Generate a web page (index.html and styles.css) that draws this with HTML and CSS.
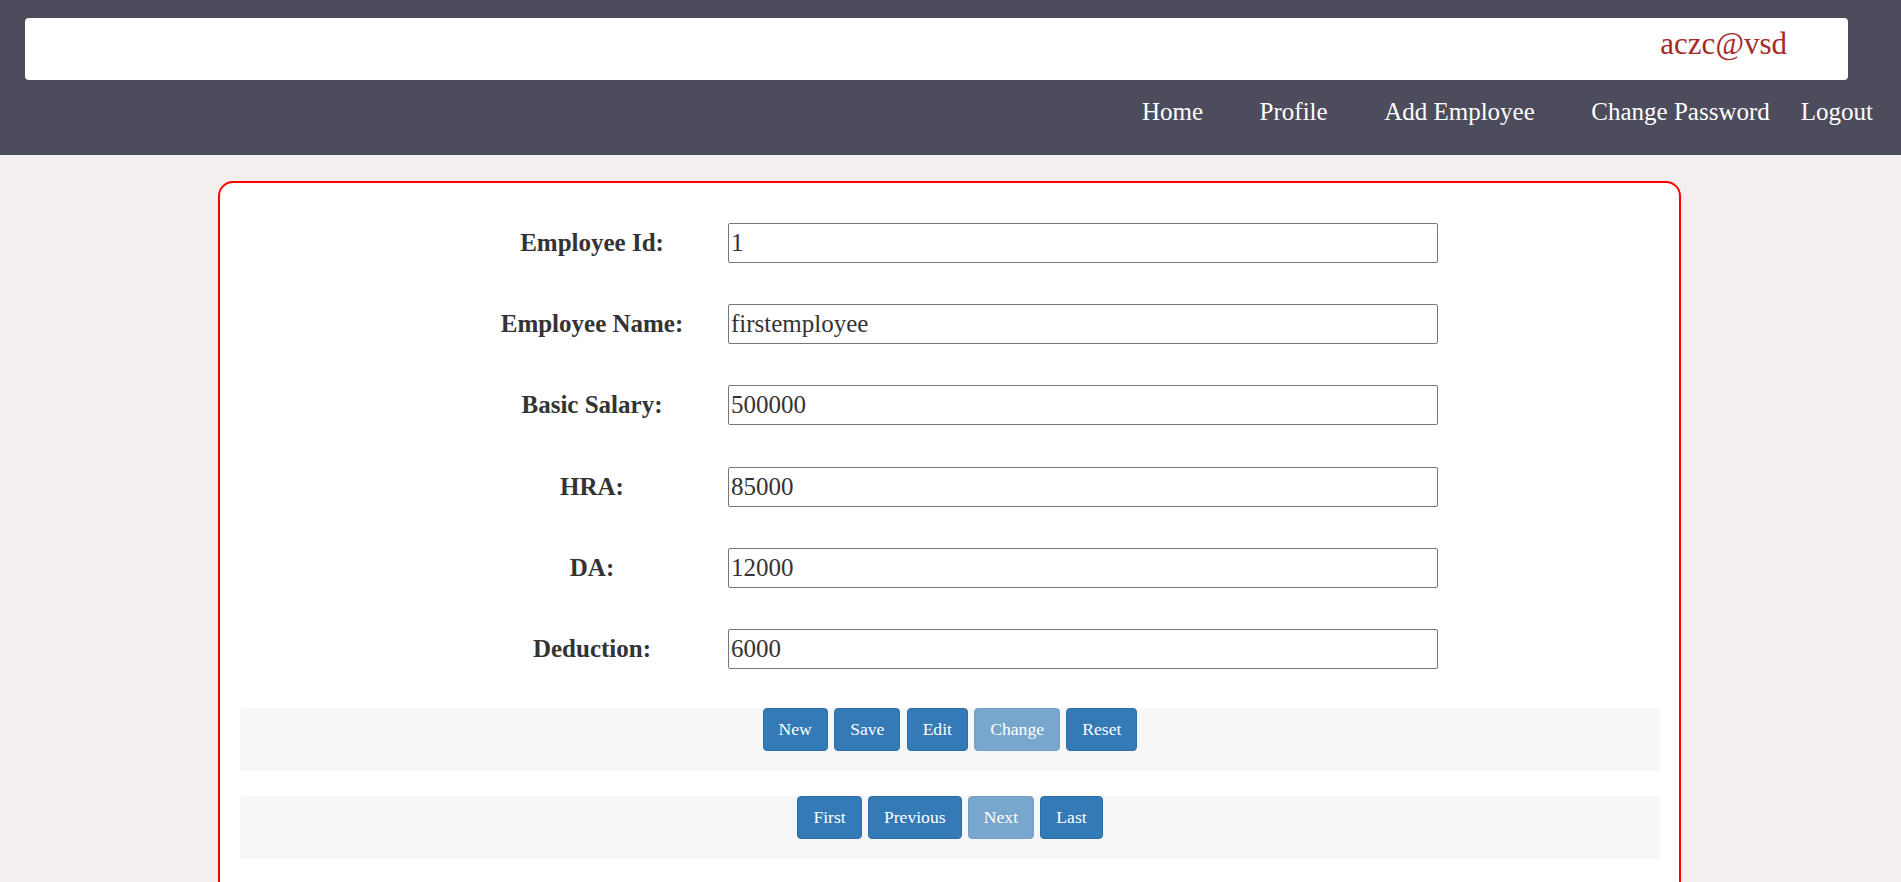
FILE: index.html
```html
<!DOCTYPE html>
<html lang="en">
<head>
<meta charset="utf-8">
<title>Employee</title>
<link rel="stylesheet" href="styles.css">
</head>
<body>
<header class="topbar">
  <div class="userbox"><span class="username">aczc@vsd</span></div>
  <nav class="nav">
    <a class="nav-link" href="#">Home</a>
    <a class="nav-link" href="#">Profile</a>
    <a class="nav-link" href="#">Add Employee</a>
    <a class="nav-link" href="#">Change Password</a>
    <a class="nav-link nav-logout" href="#">Logout</a>
  </nav>
</header>
<main class="card">
  <form class="emp-form">
    <label class="field-label" for="eid">Employee Id:</label>
    <input class="field-input" id="eid" type="text" value="1">
    <label class="field-label" for="ename">Employee Name:</label>
    <input class="field-input" id="ename" type="text" value="firstemployee">
    <label class="field-label" for="basic">Basic Salary:</label>
    <input class="field-input" id="basic" type="text" value="500000">
    <label class="field-label" for="hra">HRA:</label>
    <input class="field-input" id="hra" type="text" value="85000">
    <label class="field-label" for="da">DA:</label>
    <input class="field-input" id="da" type="text" value="12000">
    <label class="field-label" for="ded">Deduction:</label>
    <input class="field-input" id="ded" type="text" value="6000">
  </form>
  <div class="panel">
    <button class="btn" type="button">New</button>
    <button class="btn" type="button">Save</button>
    <button class="btn" type="button">Edit</button>
    <button class="btn btn-disabled" type="button">Change</button>
    <button class="btn" type="button">Reset</button>
  </div>
  <div class="panel panel-nav">
    <button class="btn" type="button">First</button>
    <button class="btn" type="button">Previous</button>
    <button class="btn btn-disabled" type="button">Next</button>
    <button class="btn" type="button">Last</button>
  </div>
</main>
</body>
</html>
```
FILE: styles.css
```css
html, body {
  margin: 0;
  padding: 0;
}
body {
  background: #f3efee;
  font-family: "Liberation Serif", "Times New Roman", serif;
  color: #333;
}
.topbar {
  background: #4d4c5c;
  padding: 18px 53px 0 25px;
  height: 155px;
  box-sizing: border-box;
}
.userbox {
  background: #fff;
  border-radius: 4px;
  height: 62px;
  box-sizing: border-box;
  padding: 8px 61px 0 0;
  display: flex;
  justify-content: flex-end;
  align-items: flex-start;
}
.username {
  color: #a52a2a;
  font-size: 31px;
  line-height: 35.6px;
}
.nav {
  display: flex;
  justify-content: flex-end;
  margin-top: 18px;
  margin-right: -25px;
}
.nav-link {
  color: #fff;
  text-decoration: none;
  font-size: 25px;
  line-height: 28.7px;
  margin-left: 56.5px;
}
.nav-link.nav-logout {
  margin-left: 31px;
}
.card {
  width: 1463px;
  box-sizing: border-box;
  margin: 26px 0 0 218px;
  background: #fff;
  border: 2px solid #ff0000;
  border-radius: 15px;
  padding: 40px 19px 40px 20px;
}
.emp-form {
  display: grid;
  grid-template-columns: 264px 710px;
  column-gap: 4px;
  row-gap: 41.2px;
  justify-content: center;
  align-items: center;
  margin-left: -2px;
}
.field-label {
  font-weight: bold;
  font-size: 25px;
  text-align: center;
  color: #333;
}
.field-input {
  height: 40px;
  box-sizing: border-box;
  border: 1px solid #767676;
  border-radius: 2px;
  padding: 0 2px;
  margin: 0;
  font-family: "Liberation Serif", "Times New Roman", serif;
  font-size: 25px;
  color: #333;
  background: #fff;
}
.panel {
  margin-top: 39px;
  background: #f7f7f7;
  border-radius: 4px;
  padding: 0 0 20px;
  display: flex;
  justify-content: center;
  gap: 6.3px;
}
.panel.panel-nav {
  margin-top: 25px;
}
.btn {
  background: #337ab7;
  border: 1px solid #2e6da4;
  border-radius: 4px;
  color: #fff;
  font-family: "Liberation Serif", "Times New Roman", serif;
  font-size: 17.6px;
  line-height: 22px;
  padding: 9.5px 15px;
  margin: 0;
}
.btn.btn-disabled {
  background: #78a6cd;
  border-color: #73a0c8;
}
```
